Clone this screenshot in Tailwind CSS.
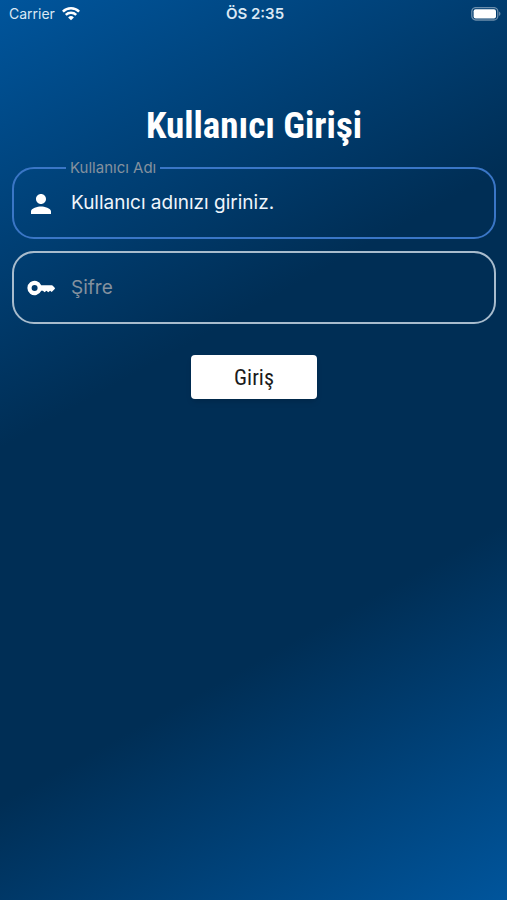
<!DOCTYPE html>
<html lang="tr">
<head>
<meta charset="utf-8">
<meta name="viewport" content="width=device-width, initial-scale=1">
<title>Kullanıcı Girişi</title>
<script src="https://cdn.jsdelivr.net/npm/@tailwindcss/browser@4"></script>
</head>
<body class="min-h-screen bg-[linear-gradient(151deg,#00559c_0%,#002e55_38%,#002e55_68%,#00559c_100%)] font-['Inter','Liberation_Sans',sans-serif] text-white">
  <header class="grid h-7 grid-cols-3 items-center pr-[6px] pl-[9px] text-[14px] leading-5 text-[#dbe8f4]">
    <div class="flex items-center gap-[7px]">
      <span>Carrier</span>
      <svg class="h-[14px] w-[18px]" viewBox="0 0 18 14" fill="none" stroke="#fff" stroke-width="2.5" aria-hidden="true">
        <path d="M.9 4.6a11.6 11.6 0 0 1 16.2 0"/>
        <path d="M3.8 7.9a7.5 7.5 0 0 1 10.4 0"/>
        <path d="M9 13.2 6.1 10.4a4.2 4.2 0 0 1 5.8 0z" fill="#fff" stroke="none"/>
      </svg>
    </div>
    <span class="text-center text-[15px] font-semibold">ÖS 2:35</span>
    <svg class="h-[14px] w-[30px] justify-self-end" viewBox="0 0 30 14" aria-hidden="true">
      <rect x=".8" y=".6" width="26" height="12.4" rx="4" fill="none" stroke="#fff" stroke-opacity=".42" stroke-width="1.3"/>
      <rect x="2.6" y="2.2" width="22.4" height="9.2" rx="2" fill="#fff"/>
      <path d="M28.1 4.6v4.4c1.8-.7 1.8-3.7 0-4.4z" fill="#fff" fill-opacity=".45"/>
    </svg>
  </header>

  <main class="pt-[75px] pr-[11px] pl-3">
    <h1 class="text-center font-['Roboto_Condensed','Roboto',sans-serif] text-[37px] leading-[46px] font-bold">Kullanıcı Girişi</h1>

    <form class="flex flex-col pt-[9px]">
      <fieldset class="min-w-0 rounded-[22px] border-2 border-[#3a76c6] pl-[52px]">
        <legend class="px-1 text-[15px] leading-5 text-[#84919e]"><label for="user">Kullanıcı Adı</label></legend>
        <div class="-ml-10 flex h-[59px] items-start gap-[15px] pt-2">
          <svg class="mt-[3px] h-[30px] w-[30px] shrink-0" viewBox="0 0 24 24" fill="#fff" aria-hidden="true"><path d="M12 12c2.21 0 4-1.79 4-4s-1.79-4-4-4-4 1.79-4 4 1.79 4 4 4zm0 2c-2.67 0-8 1.34-8 4v2h16v-2c0-2.66-5.33-4-8-4z"/></svg>
          <input id="user" type="text" placeholder="Kullanıcı adınızı giriniz." class="h-8 min-w-0 flex-1 bg-transparent text-[19px] outline-none placeholder:text-[#eff5fb]">
        </div>
      </fieldset>

      <div class="mt-3 flex h-[73px] items-center gap-[15px] rounded-[22px] border-2 border-[#a8bccd] px-3">
        <svg class="h-[30px] w-[30px] shrink-0" viewBox="0 0 30 30" fill="#fff" aria-hidden="true"><path fill-rule="evenodd" d="M15.2 12.2A7.2 7.2 0 1 0 15.2 17.8H16.8l1.8 1.4 1.8-1.4 1.9 1.4 1.8-1.4 1.6 1.1 3-2.9c.4-.4.4-.9 0-1.3l-1.9-2c-.2-.2-.5-.5-.9-.5zM8.6 12a3 3 0 1 0 0 6 3 3 0 0 0 0-6z"/></svg>
        <input type="password" aria-label="Şifre" placeholder="Şifre" class="h-10 min-w-0 flex-1 bg-transparent text-[19px] outline-none placeholder:text-[#84919e]">
      </div>

      <button type="submit" class="mt-[31px] h-11 w-[126px] self-center rounded-[4px] bg-white font-['Roboto_Condensed','Roboto',sans-serif] text-[22px] text-[#1b1b1b] shadow-md">Giriş</button>
    </form>
  </main>
</body>
</html>
